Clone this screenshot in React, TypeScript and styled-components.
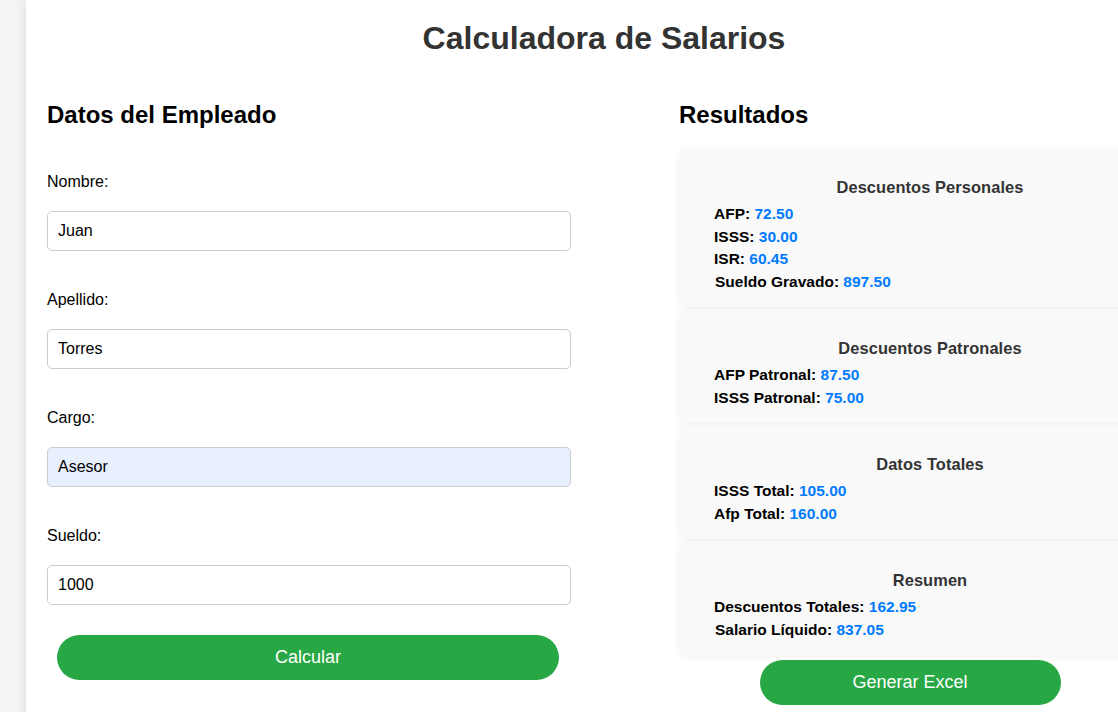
import React from 'react'
import styled, { createGlobalStyle } from 'styled-components'

const GlobalStyle = createGlobalStyle`
  html, body {
    margin: 0;
    padding: 0;
    background: #f4f4f4;
    font-family: "Liberation Sans", Arial, sans-serif;
    overflow: hidden;
  }
`

const Page = styled.div`
  padding-left: 26px;
  width: 1200px;
  height: 712px;
  overflow: hidden;
`

const Container = styled.div`
  width: 1114px;
  padding: 0 21px 40px;
  background: #fff;
  box-shadow: 0 0 10px rgba(0, 0, 0, 0.1);
  min-height: 712px;
`

const Title = styled.h1`
  margin: 0;
  padding-top: 20px;
  text-align: center;
  font-size: 32px;
  line-height: 37px;
  font-weight: bold;
  color: #333;
`

const Columns = styled.div`
  display: flex;
  gap: 108px;
  margin-top: 44px;
`

const FormColumn = styled.div`
  width: 524px;
`

const ResultColumn = styled.div`
  width: 462px;
  display: flex;
  flex-direction: column;
`

const SectionTitle = styled.h2`
  margin: 0;
  font-size: 24px;
  line-height: 28px;
  font-weight: bold;
  color: #000;
`

const Fields = styled.div`
  margin-top: 44px;
  display: flex;
  flex-direction: column;
  gap: 40px;
`

const Field = styled.div`
  display: flex;
  flex-direction: column;
  gap: 20px;
`

const Label = styled.label`
  font-size: 16px;
  line-height: 18px;
  color: #000;
`

const Input = styled.input<{ $filled?: boolean }>`
  box-sizing: border-box;
  width: 100%;
  height: 40px;
  padding: 0 10px;
  border: 1px solid #ccc;
  border-radius: 5px;
  font-family: inherit;
  font-size: 16px;
  color: #000;
  background: ${p => (p.$filled ? '#e8f0fe' : '#fff')};
  outline: none;
`

const GreenButton = styled.button<{ $width: number }>`
  display: block;
  width: ${p => p.$width}px;
  height: 45px;
  border: none;
  border-radius: 23px;
  background: #28a745;
  color: #fff;
  font-family: inherit;
  font-size: 18px;
  cursor: pointer;
`

const CalcButton = styled(GreenButton)`
  margin: 30px 0 0 10px;
`

const ExcelButton = styled(GreenButton)`
  margin: 5px auto 0;
`

const Cards = styled.div`
  margin-top: 19px;
  display: flex;
  flex-direction: column;
  gap: 2px;
`

const Card = styled.div`
  width: 100%;
  padding: 20px 20px 14px;
  background: #f9f9f9;
  border-radius: 8px;
  box-shadow: 0 2px 6px rgba(0, 0, 0, 0.06);
`

const CardTitle = styled.h3`
  margin: 9px 0 6px;
  text-align: center;
  font-size: 16.4px;
  line-height: 20px;
  font-weight: bold;
  color: #333;
  letter-spacing: 0.1px;
`

const Row = styled.div<{ $shift?: boolean }>`
  padding-left: ${p => (p.$shift ? 16 : 15)}px;
  font-size: 15.5px;
  line-height: 22.5px;
  font-weight: bold;
  color: #000;
`

const Value = styled.span`
  color: #007bff;
`

type Item = { label: string; value: string; shift?: boolean }

const groups: { title: string; items: Item[] }[] = [
  {
    title: 'Descuentos Personales',
    items: [
      { label: 'AFP', value: '72.50' },
      { label: 'ISSS', value: '30.00' },
      { label: 'ISR', value: '60.45' },
      { label: 'Sueldo Gravado', value: '897.50', shift: true },
    ],
  },
  {
    title: 'Descuentos Patronales',
    items: [
      { label: 'AFP Patronal', value: '87.50' },
      { label: 'ISSS Patronal', value: '75.00' },
    ],
  },
  {
    title: 'Datos Totales',
    items: [
      { label: 'ISSS Total', value: '105.00' },
      { label: 'Afp Total', value: '160.00' },
    ],
  },
  {
    title: 'Resumen',
    items: [
      { label: 'Descuentos Totales', value: '162.95' },
      { label: 'Salario Líquido', value: '837.05', shift: true },
    ],
  },
]

const fields = [
  { label: 'Nombre:', value: 'Juan' },
  { label: 'Apellido:', value: 'Torres' },
  { label: 'Cargo:', value: 'Asesor', filled: true },
  { label: 'Sueldo:', value: '1000' },
]

export default function App() {
  return (
    <>
      <GlobalStyle />
      <Page>
        <Container>
          <Title>Calculadora de Salarios</Title>
          <Columns>
            <FormColumn>
              <SectionTitle>Datos del Empleado</SectionTitle>
              <Fields>
                {fields.map((f, i) => (
                  <Field key={'f' + i}>
                    <Label>{f.label}</Label>
                    <Input defaultValue={f.value} $filled={f.filled} />
                  </Field>
                ))}
              </Fields>
              <CalcButton $width={502}>Calcular</CalcButton>
            </FormColumn>
            <ResultColumn>
              <SectionTitle>Resultados</SectionTitle>
              <Cards>
                {groups.map((g, i) => (
                  <Card key={'g' + i}>
                    <CardTitle>{g.title}</CardTitle>
                    {g.items.map((it, j) => (
                      <Row key={'r' + j} $shift={it.shift}>
                        {it.label}: <Value>{it.value}</Value>
                      </Row>
                    ))}
                  </Card>
                ))}
              </Cards>
              <ExcelButton $width={301}>Generar Excel</ExcelButton>
            </ResultColumn>
          </Columns>
        </Container>
      </Page>
    </>
  )
}
